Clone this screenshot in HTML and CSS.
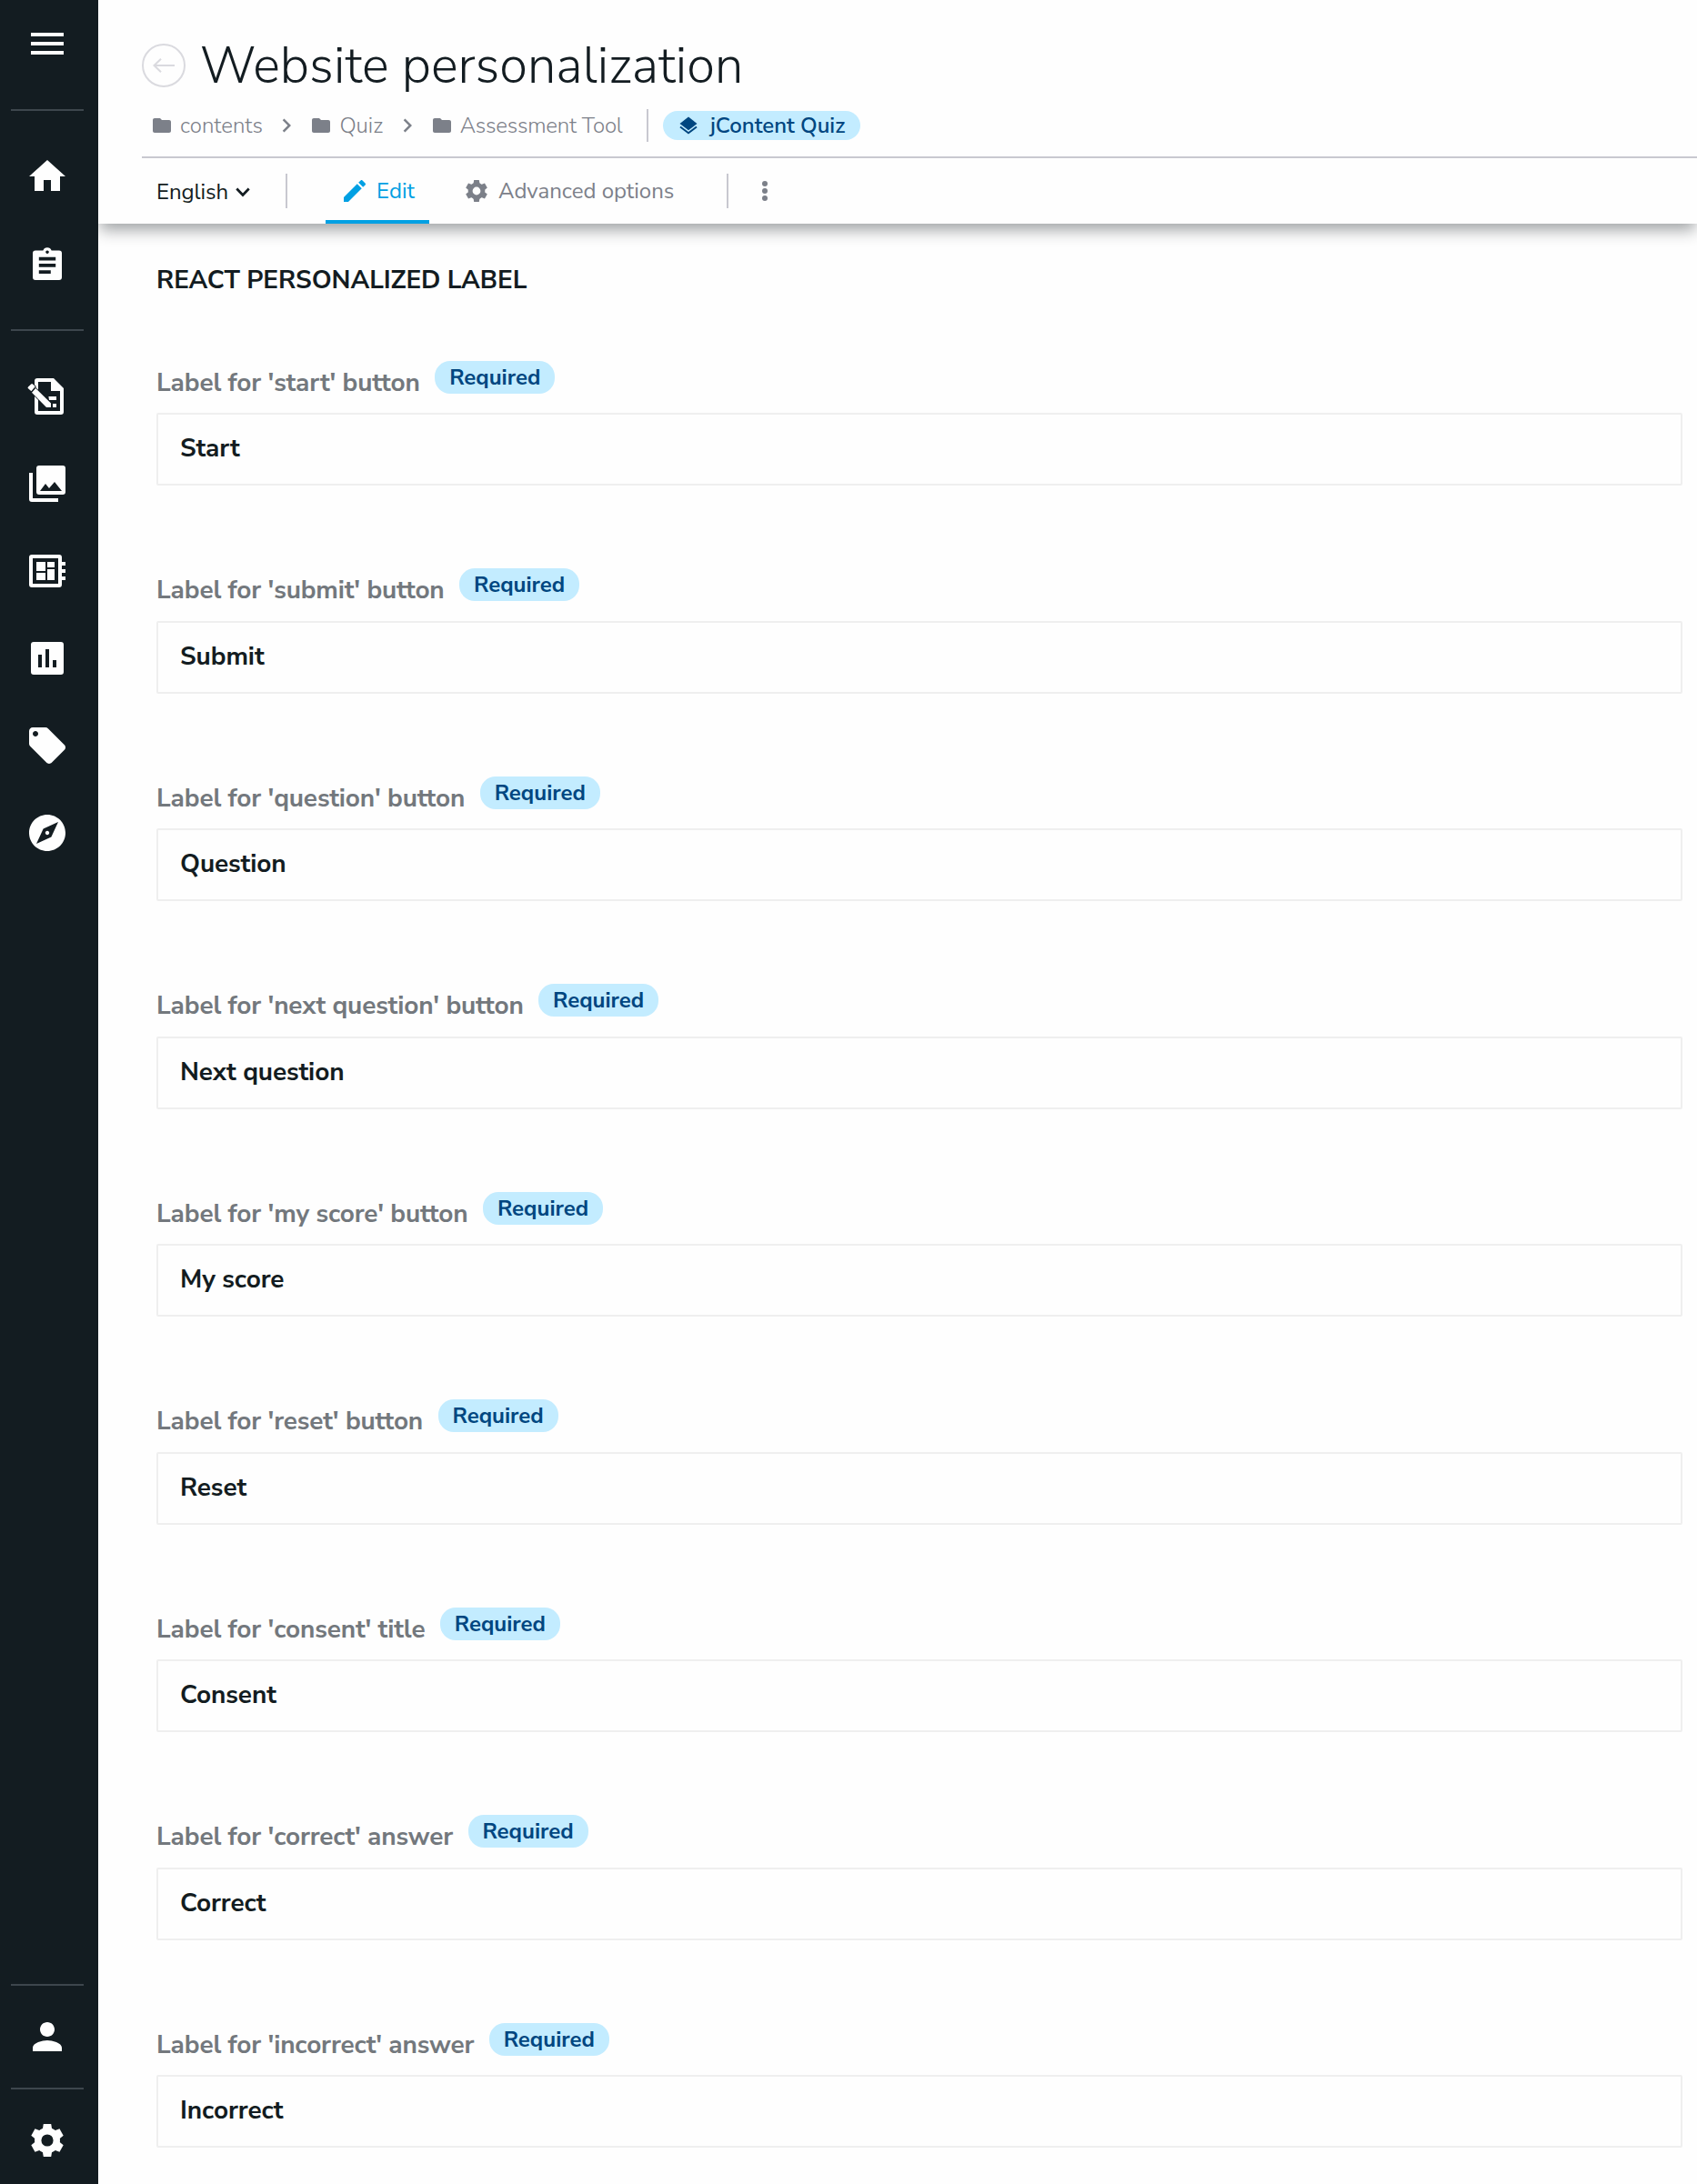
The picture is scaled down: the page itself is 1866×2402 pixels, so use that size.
FILE: index.html
```html
<!DOCTYPE html>
<html lang="en">
<head>
<meta charset="utf-8">
<title>Website personalization</title>
<link rel="stylesheet" href="styles.css">
</head>
<body>
<svg class="sprite" width="0" height="0" aria-hidden="true">
  <symbol id="folder" viewBox="0 0 24 24"><path d="M10 4H4c-1.1 0-2 .9-2 2v12c0 1.1.9 2 2 2h16c1.100 0 2-.9 2-2V8c0-1.100-.9-2-2-2h-8z"/></symbol>
  <symbol id="chevron" viewBox="0 0 24 24"><path d="M8.590 16.590L13.170 12 8.590 7.410 10 6l6 6-6 6z"/></symbol>
  <symbol id="gear" viewBox="-12 -12 24 24">
    <circle r="5.150" fill="none" stroke="currentColor" stroke-width="3.700"/>
    <path id="tooth" d="M-2.100-9H2.100L2.700-5.500H-2.700z"/>
    <use href="#tooth" transform="rotate(60)"/><use href="#tooth" transform="rotate(120)"/><use href="#tooth" transform="rotate(180)"/><use href="#tooth" transform="rotate(240)"/><use href="#tooth" transform="rotate(300)"/>
  </symbol>
</svg>
<div class="app">
  <nav class="sidebar">
    <div class="group group-menu">
      <svg class="nav-icon" viewBox="0 0 24 24"><path d="M3 18h18v-2H3zm0-5h18v-2H3zm0-7v2h18V6z"/></svg>
    </div>
    <div class="group group-home">
      <svg class="nav-icon" viewBox="0 0 24 24"><path d="M10 20v-6h4v6h5v-8h3L12 3 2 12h3v8z"/></svg>
      <svg class="nav-icon" viewBox="0 0 24 24"><path fill-rule="evenodd" d="M5.500 4.700H9.700a2.450 2.450 0 0 1 4.600 0H18.500A1.500 1.500 0 0 1 20 6.200V19.500A1.500 1.500 0 0 1 18.500 21H5.500A1.500 1.500 0 0 1 4 19.500V6.200A1.500 1.500 0 0 1 5.500 4.700zM12 4.700a.9.9 0 1 0 .01 0zM7.400 8.400v1.900h9.200V8.400zM7.400 12v1.900h9.200V12zM7.400 15.600v1.900h6.500v-1.900z"/></svg>
    </div>
    <div class="group group-apps">
      <svg class="nav-icon" viewBox="0 0 24 24"><path fill-rule="evenodd" d="M15.500 2H6.500A1.500 1.500 0 0 0 5 3.500V20.500A1.500 1.500 0 0 0 6.500 22H19.500A1.500 1.500 0 0 0 21 20.500V7.500zM7 4h7v5h5v11H7z"/><path d="M12.700 12H17v2h-4zM15 16h2v2h-2z"/><path class="pencil" d="M5.600 7.500L14 15.700V18H11.500L3.500 9.900z"/><path class="pencil" d="M1.500 6.700L3.100 5.200a.7.7 0 0 1 .9 0L5.400 6.500 3.200 9.100 1.500 7.600a.6.600 0 0 1 0-.9z"/></svg>
      <svg class="nav-icon" viewBox="0 0 24 24"><path fill-rule="evenodd" d="M7.500 2H20.500A1.500 1.500 0 0 1 22 3.500V16.500A1.500 1.500 0 0 1 20.500 18H7.500A1.500 1.500 0 0 1 6 16.500V3.500A1.500 1.500 0 0 1 7.500 2zM8 16H20L16 11 13 14.500 11 12zM2 6H4V20H18V22H3.500A1.500 1.500 0 0 1 2 20.500z"/></svg>
      <svg class="nav-icon" viewBox="0 0 24 24"><path d="M22 9V7h-2V4.500A1.500 1.500 0 0 0 18.500 3h-15A1.500 1.500 0 0 0 2 4.500v15A1.500 1.500 0 0 0 3.500 21h15a1.500 1.500 0 0 0 1.500-1.500V17h2v-2h-2v-2h2v-2h-2V9zm-4 10H4V5h14zM6 13h5v4H6zm6-6h4v3h-4zM6 7h5v5H6zm6 4h4v6h-4z"/></svg>
      <svg class="nav-icon" viewBox="0 0 24 24"><path d="M19.500 3h-15A1.500 1.500 0 0 0 3 4.500v15A1.500 1.500 0 0 0 4.500 21h15a1.500 1.500 0 0 0 1.500-1.500v-15A1.500 1.500 0 0 0 19.500 3zM9 17H7v-7h2zm4 0h-2V7h2zm4 0h-2v-4h2z"/></svg>
      <svg class="nav-icon" viewBox="0 0 24 24"><path d="M21.410 11.580l-9-9C12.050 2.220 11.550 2 11 2H4c-1.100 0-2 .9-2 2v7c0 .55.220 1.050.59 1.420l9 9c.36.360.86.580 1.410.58.550 0 1.050-.22 1.410-.59l7-7c.37-.36.590-.86.590-1.410 0-.55-.23-1.060-.59-1.420zM5.500 7C4.670 7 4 6.330 4 5.500S4.670 4 5.500 4 7 4.670 7 5.500 6.330 7 5.500 7z"/></svg>
      <svg class="nav-icon" viewBox="0 0 24 24"><path d="M12 10.900c-.61 0-1.100.49-1.100 1.100s.49 1.100 1.100 1.100c.61 0 1.100-.49 1.100-1.100s-.49-1.100-1.100-1.100zM12 2C6.480 2 2 6.480 2 12s4.480 10 10 10 10-4.480 10-10S17.520 2 12 2zm2.190 12.190L6 18l3.810-8.190L18 6l-3.810 8.190z"/></svg>
    </div>
    <div class="group group-user">
      <svg class="nav-icon" viewBox="0 0 24 24"><path d="M12 12c2.210 0 4-1.790 4-4s-1.790-4-4-4-4 1.790-4 4 1.790 4 4 4zm0 2c-2.670 0-8 1.340-8 4v2h16v-2c0-2.660-5.330-4-8-4z"/></svg>
    </div>
    <div class="group group-settings">
      <svg class="nav-icon"><use href="#gear"/></svg>
    </div>
  </nav>

  <div class="page">
    <header class="header">
      <div class="title-row">
        <button class="back" type="button" aria-label="Back"><svg viewBox="0 0 24 16" width="24" height="16"><path d="M24 8H1.500M9 .8L1.500 8 9 15.200" fill="none" stroke="currentColor" stroke-width="2"/></svg></button>
        <h1 class="title">Website personalization</h1>
      </div>
      <div class="crumbs">
        <svg class="crumb-icon"><use href="#folder"/></svg><span class="crumb">contents</span>
        <svg class="crumb-sep"><use href="#chevron"/></svg>
        <svg class="crumb-icon"><use href="#folder"/></svg><span class="crumb">Quiz</span>
        <svg class="crumb-sep"><use href="#chevron"/></svg>
        <svg class="crumb-icon"><use href="#folder"/></svg><span class="crumb crumb-last">Assessment Tool</span>
        <span class="divider divider-crumbs"></span>
        <span class="type-chip"><svg viewBox="0 0 24 24" width="24" height="24"><path d="M12 2.500L21.500 10 12 17.300 2.500 10z"/><path d="M3 13.500L12 20.300l9-6.800" fill="none" stroke="currentColor" stroke-width="1.900"/></svg>jContent Quiz</span>
      </div>
      <div class="toolbar">
        <span class="language">English<svg viewBox="0 0 16 11" width="16" height="11"><path d="M1.300 1.500L8 8.500l6.700-7" fill="none" stroke="currentColor" stroke-width="2.700"/></svg></span>
        <span class="divider divider-tools"></span>
        <a class="tab tab-active"><svg viewBox="0 0 24 24" width="32" height="32"><path d="M3 17.250V21h3.750L17.810 9.940l-3.750-3.750zM20.710 7.040c.39-.39.390-1.020 0-1.410l-2.340-2.340c-.39-.39-1.020-.39-1.410 0l-1.830 1.830 3.750 3.750z"/></svg>Edit</a>
        <a class="tab tab-options"><svg width="32" height="32"><use href="#gear"/></svg>Advanced options</a>
        <span class="divider divider-tools"></span>
        <svg class="more" viewBox="0 0 6 22" width="6" height="22"><circle cx="3" cy="3" r="3"/><circle cx="3" cy="11" r="3"/><circle cx="3" cy="19" r="3"/></svg>
      </div>
    </header>

    <main class="content">
      <h2 class="section">REACT PERSONALIZED LABEL</h2>
      <div class="field"><div class="head"><label class="label">Label for 'start' button</label><span class="badge">Required</span></div><div class="input">Start</div></div>
      <div class="field"><div class="head"><label class="label">Label for 'submit' button</label><span class="badge">Required</span></div><div class="input">Submit</div></div>
      <div class="field"><div class="head"><label class="label">Label for 'question' button</label><span class="badge">Required</span></div><div class="input">Question</div></div>
      <div class="field"><div class="head"><label class="label">Label for 'next question' button</label><span class="badge">Required</span></div><div class="input">Next question</div></div>
      <div class="field"><div class="head"><label class="label">Label for 'my score' button</label><span class="badge">Required</span></div><div class="input">My score</div></div>
      <div class="field"><div class="head"><label class="label">Label for 'reset' button</label><span class="badge">Required</span></div><div class="input">Reset</div></div>
      <div class="field"><div class="head"><label class="label">Label for 'consent' title</label><span class="badge">Required</span></div><div class="input">Consent</div></div>
      <div class="field"><div class="head"><label class="label">Label for 'correct' answer</label><span class="badge">Required</span></div><div class="input">Correct</div></div>
      <div class="field"><div class="head"><label class="label">Label for 'incorrect' answer</label><span class="badge">Required</span></div><div class="input">Incorrect</div></div>
    </main>
  </div>
</div>
</body>
</html>
```

FILE: styles.css
```css
* { box-sizing: border-box; }

body {
  margin: 0;
  height: 2402px;
  overflow: hidden;
  background: #fefefe;
  color: #131c21;
  font-family: "Nunito Sans", Nunito, Lato, "Open Sans", sans-serif;
  font-size: 24px;
}

svg { display: block; flex: none; fill: currentColor; }
.sprite { position: absolute; }
.app { display: flex; height: 2402px; }

/* Sidebar */
.sidebar {
  z-index: 2;
  display: flex;
  flex: none;
  flex-direction: column;
  width: 108px;
  padding-left: 12px;
  background: #131c21;
  color: #fefefe;
}
.group {
  display: flex;
  flex-direction: column;
  align-items: center;
  gap: 48px;
  width: 80px;
  border-top: 2px solid #3d464d;
}
.nav-icon { width: 48px; height: 48px; }
.group-menu { height: 120px; padding-top: 24px; border-top: 0; }
.group-home { height: 242px; padding-top: 48px; }
.group-apps { padding-top: 48px; }
.group-user { height: 114px; margin-top: auto; padding-top: 32px; }
.group-settings { height: 106px; padding-top: 32px; }
.pencil { stroke: #131c21; stroke-width: .8; paint-order: stroke; }

/* Header */
.page { display: flex; flex: 1; flex-direction: column; min-width: 0; }
.header {
  flex: none;
  height: 246px;
  padding: 48px 0 0 48px;
  background: #fefefe;
  box-shadow: 0 9px 16px -2px rgba(19, 28, 33, .4);
}
.title-row { display: flex; align-items: center; gap: 16px; height: 48px; }
.back {
  display: grid;
  place-items: center;
  width: 48px;
  height: 48px;
  padding: 0;
  border: 2px solid #dadadf;
  border-radius: 50%;
  background: none;
  color: #dadadf;
}
.title { margin: 2px 0 0; font-size: 56px; font-weight: 300; line-height: 56px; letter-spacing: .06px; }

.crumbs {
  display: flex;
  align-items: center;
  height: 52px;
  margin-top: 24px;
  padding: 0 0 16px 10px;
  color: #7c8089;
  font-weight: 300;
  line-height: 36px;
}
.crumb-icon { width: 24px; height: 24px; margin-right: 8px; }
.crumb-sep { width: 30px; height: 30px; margin: 0 11px 0 11.5px; }
.crumb-last { letter-spacing: -.2px; }
.divider { flex: none; width: 2px; background: #c8c8d0; }
.divider-crumbs { height: 36px; margin: 0 16px 0 26.5px; }
.type-chip {
  display: flex;
  align-items: center;
  gap: 12px;
  width: 217px;
  height: 32px;
  padding-left: 16px;
  border-radius: 16px;
  background: #c3ecff;
  color: #004680;
  font-weight: 600;
}

.toolbar {
  display: flex;
  align-items: center;
  height: 74px;
  border-top: 2px solid #c8c8d0;
  line-height: 32px;
}
.language { display: flex; align-items: center; gap: 8px; width: 158px; padding: 2px 0 0 16px; letter-spacing: -.05px; }
.divider-tools { height: 38px; }
.tab { display: flex; align-items: center; height: 72px; color: #7c8089; }
.tab-active { width: 114px; margin-left: 42px; padding: 4px 0 0 16px; gap: 8px; border-bottom: 4px solid #00a0e3; color: #00a0e3; }
.tab-options { width: 327px; padding-left: 36px; gap: 8px; }
.more { margin-left: 37px; color: #7c8089; }

/* Form */
.content { flex: 1; min-height: 0; padding: 43px 16px 0 64px; }
.section { margin: 0 0 68.9px; font-size: 28px; font-weight: 700; line-height: 39px; letter-spacing: -.08px; }
.field { height: 228.5px; }
.head { display: flex; align-items: flex-start; gap: 16.500px; height: 36px; }
.label { margin-top: 6px; color: #73787d; font-size: 28px; font-weight: 700; line-height: 36px; letter-spacing: -.15px; }
.badge {
  width: 132px;
  height: 36px;
  border-radius: 17px;
  background: #c3ecff;
  color: #004680;
  font-weight: 700;
  line-height: 36px;
  text-align: center;
}
.input {
  height: 80px;
  margin-top: 21.3px;
  padding-left: 24px;
  border: 2px solid #efefef;
  border-radius: 2px;
  font-size: 28px;
  font-weight: 700;
  line-height: 74px;
  letter-spacing: -.1px;
}
```
